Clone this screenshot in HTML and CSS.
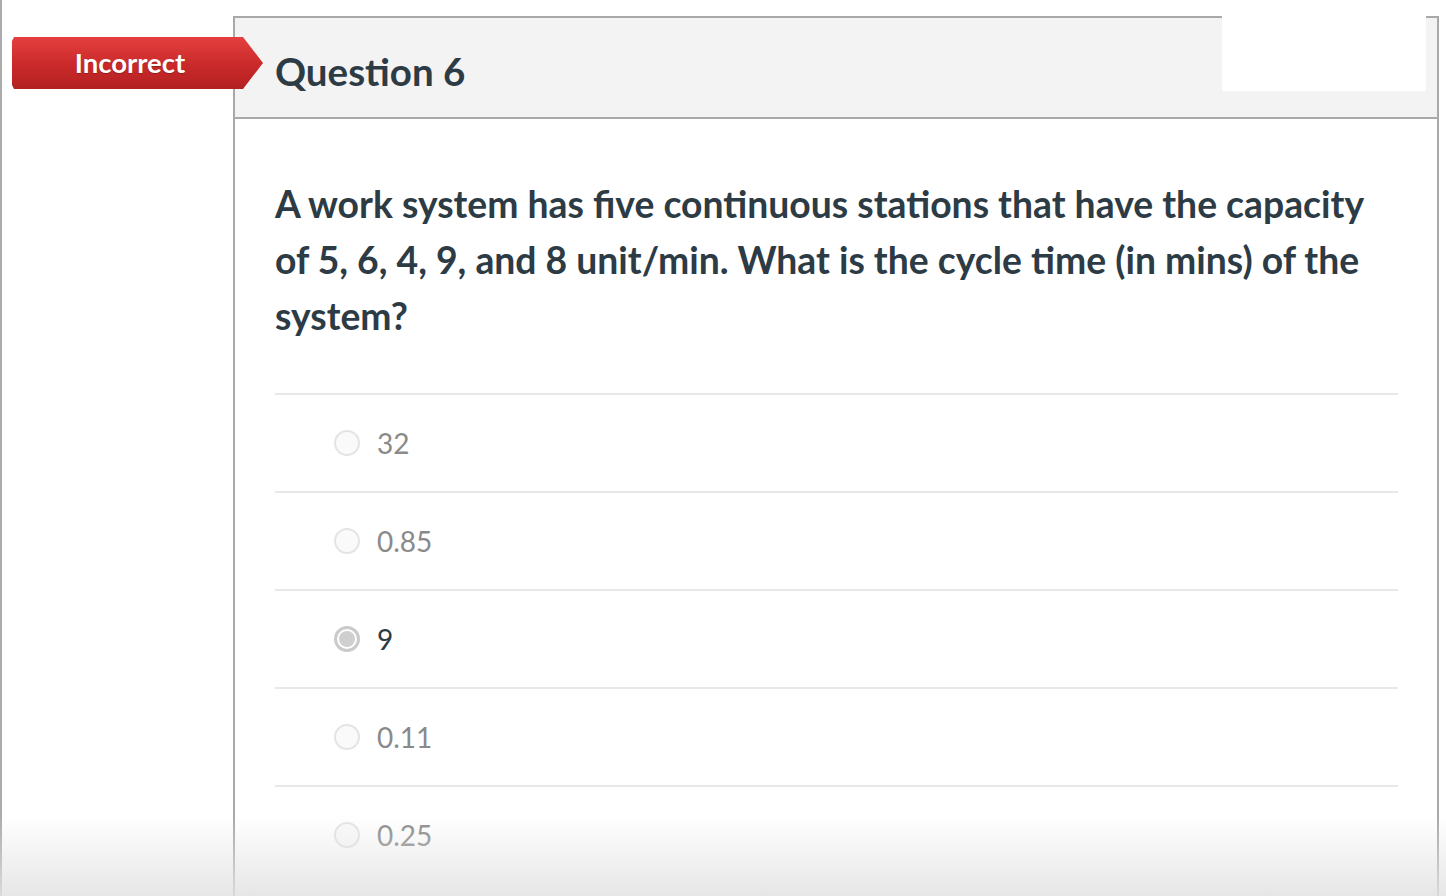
FILE: index.html
```html
<!DOCTYPE html>
<html>
<head>
<meta charset="utf-8">
<link rel="stylesheet" href="styles.css">
</head>
<body>
<div class="page">
  <div class="gutter">
    <div class="badge"><span class="badge-text">Incorrect</span></div>
  </div>
  <div class="question">
    <div class="q-header">
      <h2 class="q-title">Question 6</h2>
      <div class="mask"></div>
    </div>
    <div class="q-body">
      <p class="q-text">A work system has five continuous stations that have the capacity of 5, 6, 4, 9, and 8 unit/min. What is the cycle time (in mins) of the system?</p>
      <ul class="answers">
        <li class="answer"><span class="radio"></span><span class="label">32</span></li>
        <li class="answer"><span class="radio"></span><span class="label">0.85</span></li>
        <li class="answer selected"><span class="radio"><span class="dot"></span></span><span class="label">9</span></li>
        <li class="answer"><span class="radio"></span><span class="label">0.11</span></li>
        <li class="answer"><span class="radio"></span><span class="label">0.25</span></li>
      </ul>
    </div>
  </div>
  <div class="fade"></div>
</div>
</body>
</html>
```

FILE: styles.css
```css
html, body {
  margin: 0;
  padding: 0;
  background: #fff;
  height: 100%;
  overflow: hidden;
}
body {
  font-family: Lato, "Noto Sans", sans-serif;
  color: #2d3b45;
}
.page {
  position: relative;
  display: flex;
  height: 896px;
  border-left: 2px solid #acacac;
  box-sizing: border-box;
  padding-top: 16px;
}
.gutter {
  width: 231px;
  flex: none;
  position: relative;
}
.badge {
  position: absolute;
  left: 10px;
  top: 21px;
  width: 251px;
  height: 52px;
  background: linear-gradient(#e5403f, #c9292a 55%, #b32121);
  clip-path: polygon(0 4px, 2px 0, 231px 0, 251px 26px, 231px 52px, 2px 52px, 0 48px);
  z-index: 2;
  display: flex;
  align-items: center;
}
.badge-text {
  width: 236px;
  text-align: center;
  color: #fff;
  font-weight: 700;
  font-size: 27.5px;
  margin-top: -1px;
  text-shadow: 0 1px 1px rgba(0,0,0,0.25);
}
.question {
  width: 1206px;
  flex: none;
  border: 2px solid #a9a9a9;
  border-bottom: none;
  box-sizing: border-box;
}
.q-header {
  position: relative;
  height: 101px;
  background: #f3f3f3;
  border-bottom: 2px solid #a9a9a9;
  box-sizing: border-box;
  display: flex;
  align-items: center;
  padding-left: 40px;
}
.q-title {
  margin: 0;
  margin-top: 7px;
  font-size: 38.5px;
  font-weight: 700;
  color: #2d3b45;
}
.mask {
  position: absolute;
  left: 987px;
  top: -2px;
  width: 204px;
  height: 75px;
  background: #fff;
}
.q-body {
  padding: 57px 39px 0 40px;
}
.q-text {
  margin: 0 0 49px;
  font-size: 37.3px;
  line-height: 56px;
  font-weight: 700;
  color: #2d3b45;
  width: 1110px;
}
.answers {
  list-style: none;
  margin: 0;
  padding: 0;
}
.answer {
  height: 98px;
  border-top: 2px solid #e8e8e8;
  box-sizing: border-box;
  display: flex;
  align-items: center;
  padding-left: 59px;
}
.radio {
  width: 26px;
  height: 26px;
  border-radius: 50%;
  border: 2px solid #e4e4e4;
  background: #fafafa;
  box-sizing: border-box;
  display: flex;
  align-items: center;
  justify-content: center;
  flex: none;
}
.selected .radio {
  border: 3px solid #cacaca;
  background: #fff;
}
.dot {
  width: 16px;
  height: 16px;
  border-radius: 50%;
  background: #cfcfcf;
}
.label {
  margin-left: 17px;
  font-size: 28px;
  color: #8a8a8a;
}
.selected .label {
  color: #2d3b45;
}
.fade {
  position: absolute;
  left: -2px;
  right: 0;
  bottom: 0;
  height: 80px;
  background: linear-gradient(rgba(230,230,230,0), rgba(226,226,226,0.85));
  pointer-events: none;
}
```
